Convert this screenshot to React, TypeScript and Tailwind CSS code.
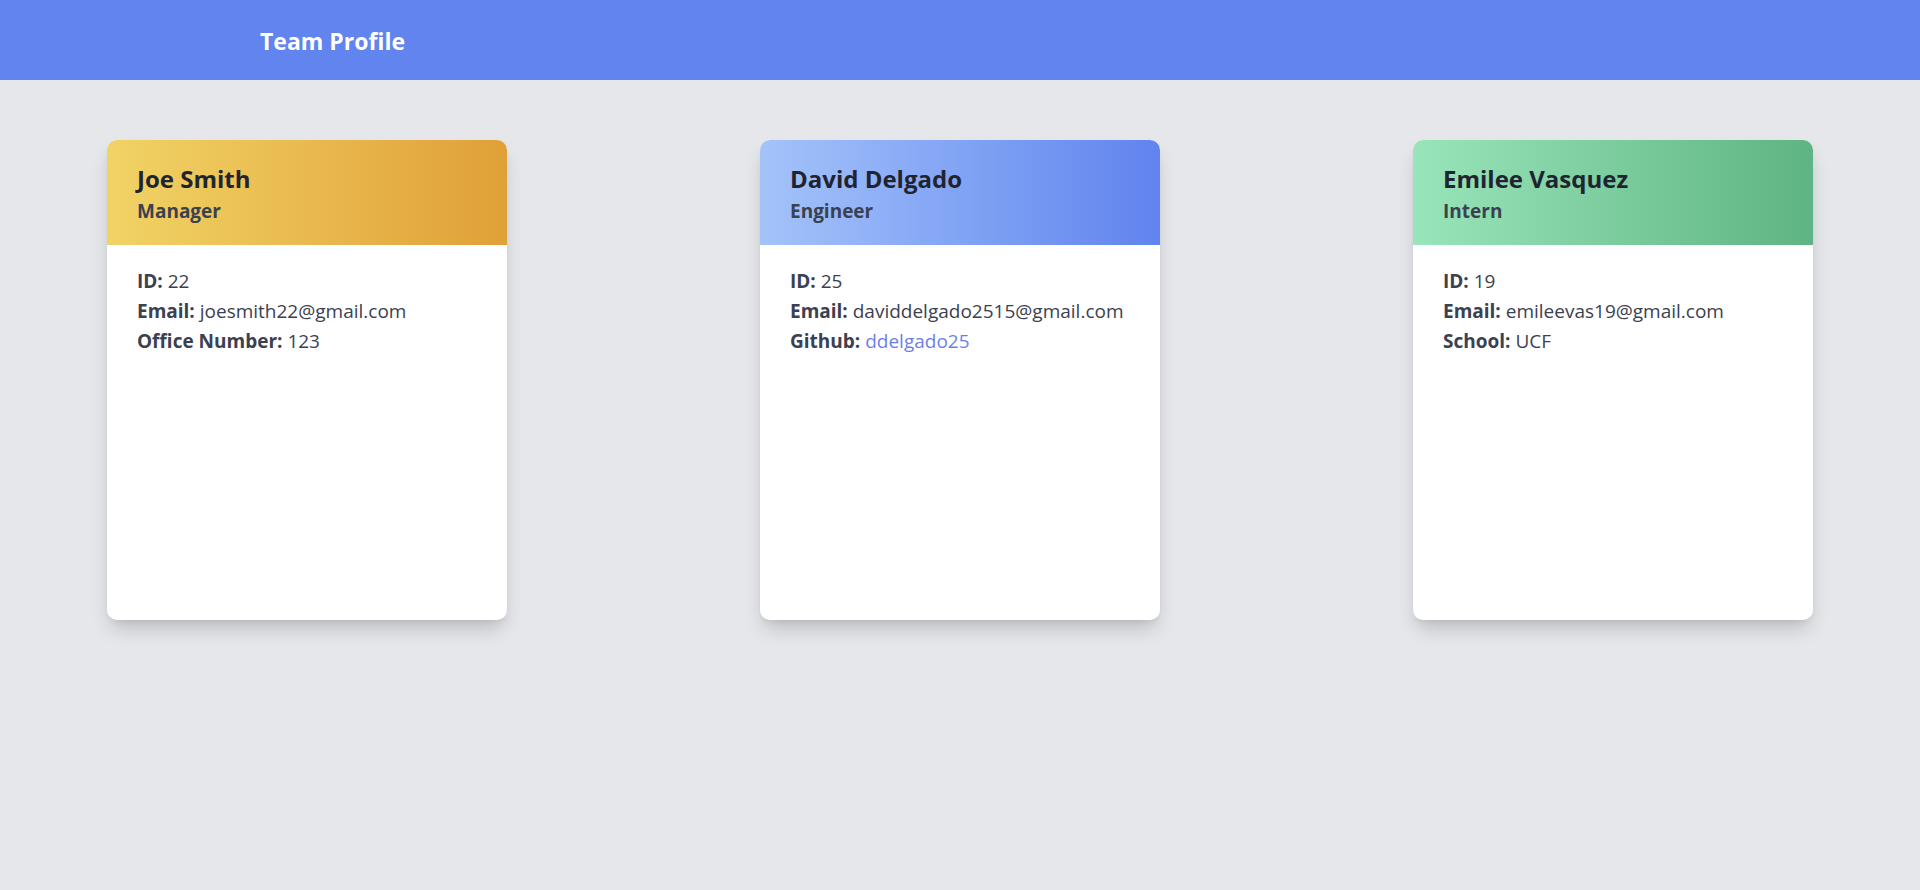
const team = [
  {
    name: "Joe Smith",
    role: "Manager",
    id: 22,
    email: "joesmith22@gmail.com",
    extraLabel: "Office Number",
    extra: "123",
    header: "bg-gradient-to-r from-[#f1d365] to-[#e0a038]",
  },
  {
    name: "David Delgado",
    role: "Engineer",
    id: 25,
    email: "daviddelgado2515@gmail.com",
    extraLabel: "Github",
    extra: "ddelgado25",
    link: true,
    header: "bg-gradient-to-r from-[#a4c3f9] to-[#6183ee]",
  },
  {
    name: "Emilee Vasquez",
    role: "Intern",
    id: 19,
    email: "emileevas19@gmail.com",
    extraLabel: "School",
    extra: "UCF",
    header: "bg-gradient-to-r from-[#99e5bb] to-[#5eb482]",
  },
];

type Member = (typeof team)[number];

const Card = ({ m }: { m: Member }) => {
  return (
    <div className="w-[400px] h-[480px] bg-white rounded-[10px] shadow-[0_12px_20px_-4px_rgba(0,0,0,0.18),0_4px_8px_-4px_rgba(0,0,0,0.1)] overflow-hidden">
      <div className={`h-[105px] px-[30px] pt-[22px] ${m.header}`}>
        <h2 className="text-[24px] leading-[34px] font-bold text-[#1f2430]">{m.name}</h2>
        <h3 className="text-[19px] leading-[30px] font-bold text-[#3a4150]">{m.role}</h3>
      </div>
      <div className="px-[30px] pt-[21px] text-[19px] leading-[30px] text-[#3b4150] whitespace-nowrap">
        <p>
          <span className="font-bold">ID:</span> {m.id}
        </p>
        <p>
          <span className="font-bold">Email:</span> {m.email}
        </p>
        <p>
          <span className="font-bold">{m.extraLabel}:</span>{" "}
          {m.link ? <a className="text-[#6c7fe8]">{m.extra}</a> : m.extra}
        </p>
      </div>
    </div>
  );
};

export default function App() {
  return (
    <div
      className="min-h-[890px] bg-[#e5e7eb]"
      style={{ fontFamily: '"Segoe UI", "Open Sans", "Noto Sans", sans-serif' }}
    >
      <header className="h-[80px] bg-[#6184ee] flex items-center pl-[260px] pt-[3px]">
        <h1 className="text-[23px] font-bold text-white">Team Profile</h1>
      </header>
      <main className="flex justify-between px-[107px] pt-[60px]">
        {team.map((m) => (
          <Card key={m.name} m={m} />
        ))}
      </main>
    </div>
  );
}
